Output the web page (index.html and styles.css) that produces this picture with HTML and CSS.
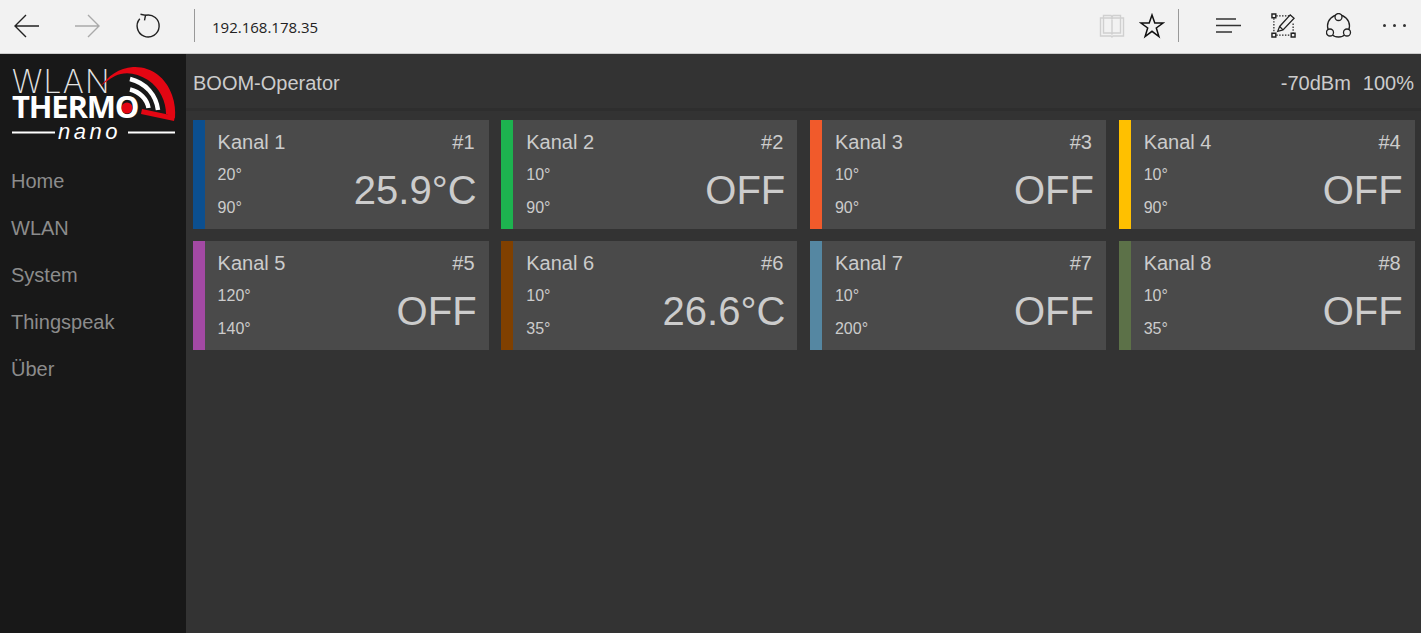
FILE: index.html
```html
<!DOCTYPE html>
<html lang="de">
<head>
  <meta charset="UTF-8">
  <title>WLANThermo Nano</title>
  <link rel="stylesheet" href="styles.css">
</head>
<body>
  <div class="browser-bar">
    <div class="nav-icons">
      <svg width="28" height="28" viewBox="0 0 28 28"><path d="M26 14H2.500M13 3 2 14l11 11" fill="none" stroke="#222" stroke-width="1.4"/></svg>
      <svg width="28" height="28" viewBox="0 0 28 28"><path d="M2 14h23.500M15 3l11 11-11 11" fill="none" stroke="#aaa" stroke-width="1.4"/></svg>
      <svg class="ico-reload" width="28" height="28" viewBox="0 0 28 28"><path d="M11.500 3.300A11 11 0 1 1 5.800 6.800M6.500 2.300l5 1-1 5" fill="none" stroke="#222" stroke-width="1.4"/></svg>
    </div>
    <div class="bar-sep"></div>
    <div class="address">192.168.178.35</div>
    <div class="tool-icons">
      <svg width="26" height="24" viewBox="0 0 26 24"><path d="M1.500 4H12l1 1 1-1h10.500v18H14l-1 1-1-1H1.500zM4.500 4V1.500H12l1 1.500 1-1.500h7.500V4M4.500 4v15H12l1 1 1-1h7.500V4M13 3v17" fill="none" stroke="#d0d0d0" stroke-width="1.400"/></svg>
      <svg class="ico-star" width="26" height="26" viewBox="0 0 26 26"><path d="M13 2l2.800 8h8.200l-6.700 5 2.600 8.500-6.900-5.200-6.900 5.200 2.600-8.500-6.700-5h8.200z" fill="none" stroke="#111" stroke-width="1.500"/></svg>
      <div class="bar-sep"></div>
      <svg class="ico-hub" width="26" height="18" viewBox="0 0 26 18"><path d="M0 2h20M0 8.500h25M0 15h16" fill="none" stroke="#333" stroke-width="1.500"/></svg>
      <svg class="ico-note" width="25" height="25" viewBox="0 0 26 26"><path d="M5.500 3h14M3 5.500v15M5.500 23h15M23 11v9.500" fill="none" stroke="#222" stroke-width="1.300" stroke-dasharray="1.500 1.500"/><path d="M1 1h4v4H1zM1 21h4v4H1zM21 21h4v4h-4z" fill="#f2f2f2" stroke="#222" stroke-width="1.500"/><path d="M7 19l2-5L20 2l4 3.500L12.500 17.500zM9 14l3.500 3.500" fill="none" stroke="#222" stroke-width="1.300"/></svg>
      <svg class="ico-share" width="26" height="26" viewBox="0 0 26 26"><circle cx="12.500" cy="13" r="11" fill="none" stroke="#222" stroke-width="1.300"/><circle cx="12.500" cy="4" r="3.500" fill="#f2f2f2" stroke="#222" stroke-width="1.300"/><circle cx="4" cy="19.500" r="3.500" fill="#f2f2f2" stroke="#222" stroke-width="1.300"/><circle cx="21" cy="19.500" r="3.500" fill="#f2f2f2" stroke="#222" stroke-width="1.300"/></svg>
      <div class="dots"><i></i><i></i><i></i></div>
    </div>
  </div>

  <div class="app">
    <aside class="sidebar">
      <div class="logo">
        <span class="logo-wlan">WLAN</span>
        <span class="logo-thermo">THERMO</span>
        <span class="logo-nano">nano</span>
        <svg class="logo-mark" width="186" height="95" viewBox="0 0 186 95">
          <path d="M100 32C108 21 119 13 133 12C150 11 166 22 172 40C175 48 175.500 56 175 63L166 59C166 47 160 33 148 25C137 18 125 16 115 21C109 24 104 28 100 32z" fill="#e30613"/>
          <path d="M142 54 175 61 174 66 141 59z" fill="#e30613"/>
          <path d="M130 24C146 28 156 40 158 55M130 34.500C140 37 147 44 148.500 53" fill="none" stroke="#fff" stroke-width="4.500"/>
          <circle cx="127" cy="53" r="5.500" fill="#e30613"/>
          <path d="M12 77.500H55M128 77.500H175" stroke="#fff" stroke-width="2"/>
        </svg>
      </div>
      <nav class="menu">
        <a>Home</a>
        <a>WLAN</a>
        <a>System</a>
        <a>Thingspeak</a>
        <a>Über</a>
      </nav>
    </aside>

    <main class="content">
      <header class="topbar">
        <span>BOOM-Operator</span>
        <span class="signal"><span>-70dBm</span><span>100%</span></span>
      </header>
      <section class="channels">
        <div class="channel c1">
          <div class="row"><span class="name">Kanal 1</span><span class="name">#1</span></div>
          <div class="row lower"><div class="limits"><span>20°</span><span>90°</span></div><div class="temp">25.9°C</div></div>
        </div>
        <div class="channel c2">
          <div class="row"><span class="name">Kanal 2</span><span class="name">#2</span></div>
          <div class="row lower"><div class="limits"><span>10°</span><span>90°</span></div><div class="temp">OFF</div></div>
        </div>
        <div class="channel c3">
          <div class="row"><span class="name">Kanal 3</span><span class="name">#3</span></div>
          <div class="row lower"><div class="limits"><span>10°</span><span>90°</span></div><div class="temp">OFF</div></div>
        </div>
        <div class="channel c4">
          <div class="row"><span class="name">Kanal 4</span><span class="name">#4</span></div>
          <div class="row lower"><div class="limits"><span>10°</span><span>90°</span></div><div class="temp">OFF</div></div>
        </div>
        <div class="channel c5">
          <div class="row"><span class="name">Kanal 5</span><span class="name">#5</span></div>
          <div class="row lower"><div class="limits"><span>120°</span><span>140°</span></div><div class="temp">OFF</div></div>
        </div>
        <div class="channel c6">
          <div class="row"><span class="name">Kanal 6</span><span class="name">#6</span></div>
          <div class="row lower"><div class="limits"><span>10°</span><span>35°</span></div><div class="temp">26.6°C</div></div>
        </div>
        <div class="channel c7">
          <div class="row"><span class="name">Kanal 7</span><span class="name">#7</span></div>
          <div class="row lower"><div class="limits"><span>10°</span><span>200°</span></div><div class="temp">OFF</div></div>
        </div>
        <div class="channel c8">
          <div class="row"><span class="name">Kanal 8</span><span class="name">#8</span></div>
          <div class="row lower"><div class="limits"><span>10°</span><span>35°</span></div><div class="temp">OFF</div></div>
        </div>
      </section>
    </main>
  </div>
</body>
</html>
```

FILE: styles.css
```css
* {
  box-sizing: border-box;
}
html, body {
  height: 100%;
}
body {
  margin: 0;
  display: flex;
  flex-direction: column;
  overflow: hidden;
  font-family: "Liberation Sans", Arial, sans-serif;
  color: #ccc;
  background-color: #333;
}

/* browser chrome */
.browser-bar {
  height: 54px;
  flex: none;
  display: flex;
  align-items: center;
  padding-bottom: 2px;
  background-color: #f2f2f2;
  border-bottom: 1px solid #ccc;
}
.nav-icons {
  display: flex;
  align-items: center;
  gap: 32px;
  padding-left: 13px;
  width: 194px;
}
.ico-reload {
  margin-left: 1px;
}
.bar-sep {
  width: 1px;
  height: 33px;
  background-color: #999;
  flex: none;
}
.address {
  margin: 3px 0 0 17px;
  font-family: "Open Sans", sans-serif;
  font-size: 15px;
  color: #222;
  flex: 1;
}
.tool-icons {
  display: flex;
  align-items: center;
  width: 322px;
}
.ico-star {
  margin-left: 14px;
  margin-right: 13px;
}
.ico-hub {
  margin-left: 37px;
}
.ico-note {
  margin-left: 29px;
}
.ico-share {
  margin-left: 30px;
}
.dots {
  display: flex;
  gap: 7px;
  margin-left: 31px;
}
.dots i {
  width: 3px;
  height: 3px;
  background-color: #333;
  border-radius: 50%;
}

.app {
  flex: 1;
  display: flex;
  min-height: 0;
}

/* sidebar */
.sidebar {
  width: 186px;
  flex: none;
  background-color: #181818;
}
.logo {
  position: relative;
  height: 96px;
}
.logo-mark {
  position: absolute;
  left: 0;
  top: 1px;
}
.logo-wlan {
  position: absolute;
  left: 12px;
  top: 16px;
  font-family: Inter, sans-serif;
  font-weight: 200;
  font-size: 32px;
  line-height: 24px;
  letter-spacing: 1.2px;
  color: #e4e4e4;
}
.logo-thermo {
  position: absolute;
  left: 12px;
  top: 40px;
  font-family: "Open Sans", sans-serif;
  font-weight: 700;
  font-size: 31px;
  line-height: 24px;
  color: #fff;
  letter-spacing: -1.2px;
}
.logo-nano {
  position: absolute;
  left: 58px;
  top: 71px;
  font-size: 22px;
  line-height: 14px;
  font-style: italic;
  color: #fff;
  letter-spacing: 3.5px;
}
.menu {
  display: flex;
  flex-direction: column;
  padding-top: 8px;
}
.menu a {
  height: 47px;
  padding-left: 11px;
  font-size: 20px;
  line-height: 47px;
  color: #8c8c8c;
}

/* main area */
.content {
  flex: 1;
  min-width: 0;
}
.topbar {
  height: 57px;
  padding: 4px 7px 0;
  display: flex;
  justify-content: space-between;
  align-items: center;
  font-size: 20px;
  color: #ccc;
  background-color: #333;
  border-bottom: 3px solid #2e2e2e;
}
.signal {
  display: flex;
  gap: 12px;
}
.channels {
  display: grid;
  grid-template-columns: repeat(4, 296px);
  column-gap: 12.7px;
  row-gap: 12px;
  padding: 9px 6.6px;
}
.channel {
  height: 109px;
  padding: 8px 14px 0 13px;
  background-color: #4a4a4a;
  border-left: 12px solid;
}
.c1 { border-left-color: #0c4f8f; }
.c2 { border-left-color: #1db34f; }
.c3 { border-left-color: #f15a2b; }
.c4 { border-left-color: #ffc000; }
.c5 { border-left-color: #a349a4; }
.c6 { border-left-color: #804000; }
.c7 { border-left-color: #5587a2; }
.c8 { border-left-color: #5c7148; }
.row {
  display: flex;
  justify-content: space-between;
}
.name {
  font-size: 20px;
  line-height: 28px;
}
.lower {
  align-items: flex-end;
}
.limits {
  display: flex;
  flex-direction: column;
  padding-top: 2px;
  font-size: 16px;
  line-height: 33px;
}
.temp {
  font-size: 40px;
  line-height: 50px;
  margin-right: -2px;
  margin-bottom: 9px;
}
```
